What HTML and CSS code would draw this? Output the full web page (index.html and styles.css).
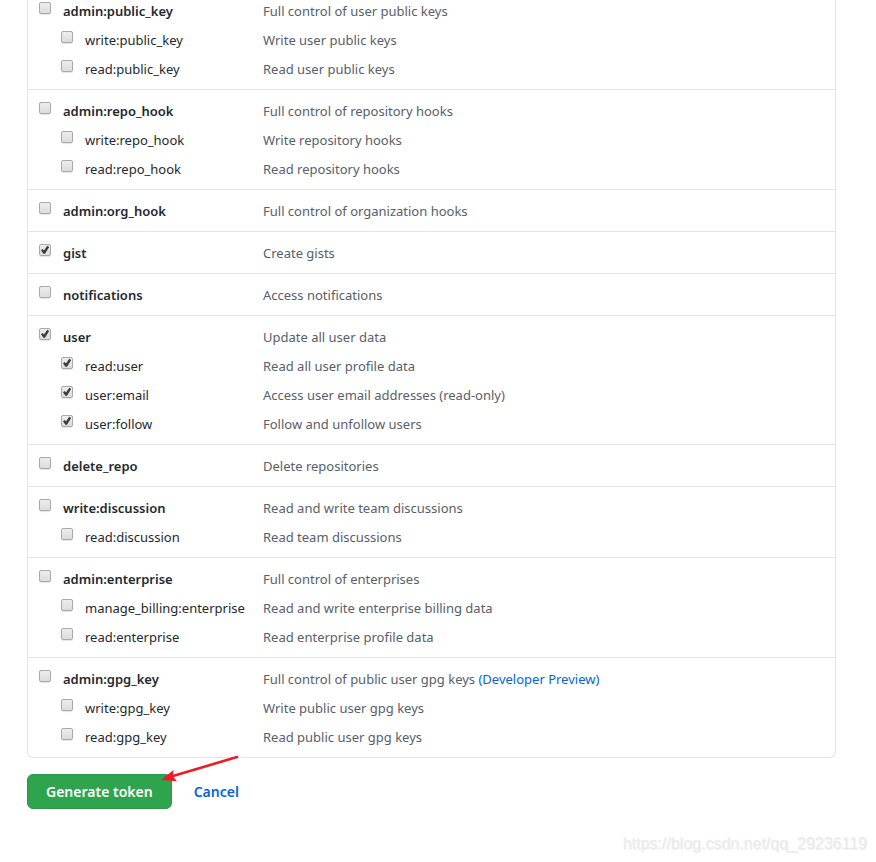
FILE: index.html
```html
<!DOCTYPE html>
<html lang="en">
<head>
    <meta charset="UTF-8">
    <meta name="viewport" content="width=device-width, initial-scale=1.0">
    <title>New personal access token</title>

    <link rel="stylesheet" href="styles.css">
</head>
<body>
    <form class="token-form">
        <!-- Scopes -->
        <ul class="scopes">
            <li class="scope-group">
                <div class="scope"><label><input type="checkbox"> admin:public_key</label><span>Full control of user public keys</span></div>
                <div class="scope child"><label><input type="checkbox"> write:public_key</label><span>Write user public keys</span></div>
                <div class="scope child"><label><input type="checkbox"> read:public_key</label><span>Read user public keys</span></div>
            </li>
            <li class="scope-group">
                <div class="scope"><label><input type="checkbox"> admin:repo_hook</label><span>Full control of repository hooks</span></div>
                <div class="scope child"><label><input type="checkbox"> write:repo_hook</label><span>Write repository hooks</span></div>
                <div class="scope child"><label><input type="checkbox"> read:repo_hook</label><span>Read repository hooks</span></div>
            </li>
            <li class="scope-group">
                <div class="scope"><label><input type="checkbox"> admin:org_hook</label><span>Full control of organization hooks</span></div>
            </li>
            <li class="scope-group">
                <div class="scope"><label><input type="checkbox" checked> gist</label><span>Create gists</span></div>
            </li>
            <li class="scope-group">
                <div class="scope"><label><input type="checkbox"> notifications</label><span>Access notifications</span></div>
            </li>
            <li class="scope-group">
                <div class="scope"><label><input type="checkbox" checked> user</label><span>Update all user data</span></div>
                <div class="scope child"><label><input type="checkbox" checked> read:user</label><span>Read all user profile data</span></div>
                <div class="scope child"><label><input type="checkbox" checked> user:email</label><span>Access user email addresses (read-only)</span></div>
                <div class="scope child"><label><input type="checkbox" checked> user:follow</label><span>Follow and unfollow users</span></div>
            </li>
            <li class="scope-group">
                <div class="scope"><label><input type="checkbox"> delete_repo</label><span>Delete repositories</span></div>
            </li>
            <li class="scope-group">
                <div class="scope"><label><input type="checkbox"> write:discussion</label><span>Read and write team discussions</span></div>
                <div class="scope child"><label><input type="checkbox"> read:discussion</label><span>Read team discussions</span></div>
            </li>
            <li class="scope-group">
                <div class="scope"><label><input type="checkbox"> admin:enterprise</label><span>Full control of enterprises</span></div>
                <div class="scope child"><label><input type="checkbox"> manage_billing:enterprise</label><span>Read and write enterprise billing data</span></div>
                <div class="scope child"><label><input type="checkbox"> read:enterprise</label><span>Read enterprise profile data</span></div>
            </li>
            <li class="scope-group">
                <div class="scope"><label><input type="checkbox"> admin:gpg_key</label><span>Full control of public user gpg keys <a href="#">(Developer Preview)</a></span></div>
                <div class="scope child"><label><input type="checkbox"> write:gpg_key</label><span>Write public user gpg keys</span></div>
                <div class="scope child"><label><input type="checkbox"> read:gpg_key</label><span>Read public user gpg keys</span></div>
            </li>
        </ul>

        <!-- Buttons -->
        <div class="actions">
            <button type="submit" class="btn-primary">Generate token</button>
            <a href="#">Cancel</a>
            <svg class="arrow" width="80" height="30" viewBox="0 0 80 30" aria-hidden="true">
                <path d="M76 3L12 22" fill="none" stroke="#ed1c24" stroke-width="2.6" stroke-linecap="round"/>
                <path d="M0 26L12.500 16L11.800 22.200L16 27.200Z" fill="#ed1c24"/>
            </svg>
        </div>
    </form>

    <footer class="watermark">https://blog.csdn.net/qq_29236119</footer>
</body>
</html>
```

FILE: styles.css
```css
body {
    font-family: "Noto Sans", "Open Sans", sans-serif;
    font-size: 13px;
    line-height: 21px;
    color: #24292e;
    background-color: #fff;
    margin: 0;
}

a {
    color: #0366d6;
    text-decoration: none;
}

a:hover {
    text-decoration: underline;
}

.token-form {
    margin: 0 40px 0 27px;
}

/* Scope list */
.scopes {
    list-style: none;
    margin: 0;
    padding: 0;
    border: 1px solid #e1e4e8;
    border-top: 0;
    border-radius: 0 0 6px 6px;
}

.scope-group {
    display: grid;
    gap: 8px;
    padding: 11px 11px 9px;
    border-top: 1px solid #e1e4e8;
}

.scope-group:first-child {
    border-top: 0;
    padding-top: 1px;
}

.scope {
    display: grid;
    grid-template-columns: 224px 1fr;
}

.scope label {
    display: flex;
    align-items: flex-start;
    gap: 12px;
    font-weight: 600;
}

.scope.child label {
    padding-left: 22px;
    font-weight: 400;
}

.scope span {
    color: #586069;
}

.scope input {
    appearance: none;
    box-sizing: border-box;
    width: 12px;
    height: 12px;
    margin: 1px 0 0;
    border: 1px solid #a9a9a9;
    border-radius: 2px;
    background: linear-gradient(#ededed, #dcdcdc);
    box-shadow: 0 1px 1px #e4e4e4;
}

.scope input:checked::before {
    content: "";
    display: block;
    width: 10px;
    height: 10px;
    background-color: #3c3c3c;
    clip-path: polygon(10% 52%, 27% 40%, 40% 56%, 72% 8%, 92% 20%, 50% 88%, 34% 88%);
}

/* Buttons */
.actions {
    position: relative;
    display: flex;
    align-items: center;
    gap: 22px;
    margin-top: 16px;
    font-size: 14px;
    font-weight: 600;
}

.btn-primary {
    padding: 6px 18px;
    font: inherit;
    color: #fff;
    background-color: #2ea44f;
    border: 1px solid #2c974b;
    border-radius: 6px;
    cursor: pointer;
}

/* Arrow pointing at the button */
.arrow {
    position: absolute;
    left: 134px;
    top: -20px;
    pointer-events: none;
}

.watermark {
    margin: 24px 9px 0;
    font-family: "Liberation Sans", Arial, sans-serif;
    font-size: 16px;
    text-align: right;
    color: #ebebeb;
    text-shadow: 1px 1px 1px #eee;
}
```
